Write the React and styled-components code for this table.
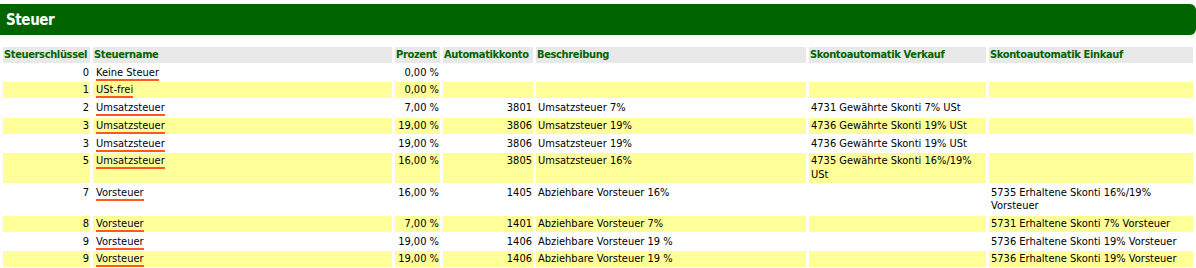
import styled, { createGlobalStyle } from 'styled-components';

const GlobalStyle = createGlobalStyle`
    html, body {
        margin: 0;
        padding: 0;
        background: #ffffff;
    }
    body {
        font-family: "DejaVu Sans Condensed", "DejaVu Sans", "Liberation Sans", sans-serif;
        font-size: 11px;
        color: #000000;
    }
`

const Page = styled.div`
    width: 1196px;
    padding-top: 4px;
`

const TitleBar = styled.div`
    height: 31px;
    background: #006400;
    border-radius: 0 6px 6px 0;
    display: flex;
    align-items: center;
    padding-left: 6px;
`

const Title = styled.h1`
    margin: 0;
    color: #ffffff;
    font-family: "DejaVu Sans Condensed", "DejaVu Sans", sans-serif;
    font-size: 15px;
    font-weight: bold;
    letter-spacing: -0.4px;
`

const Table = styled.table`
    width: 1196px;
    margin-top: 10px;
    table-layout: fixed;
    border-collapse: separate;
    border-spacing: 3px 2px;
`

const HeadCell = styled.th`
    background: #e8e8e8;
    color: #006400;
    font-weight: bold;
    text-align: left;
    padding: 1px;
    line-height: 13.7px;
    letter-spacing: -0.35px;
    white-space: nowrap;
    overflow: hidden;
`

const Cell = styled.td`
    background: ${(p) => (p.$yellow ? '#ffff99' : '#ffffff')};
    text-align: ${(p) => (p.$num ? 'right' : 'left')};
    vertical-align: top;
    padding: 1px ${(p) => (p.$num ? '1px' : '2px')};
    line-height: 13.7px;
`

const NameLink = styled.a`
    color: #000022;
    text-decoration: none;
    border-bottom: 2px solid #ff5a1a;
    margin-left: 1px;
`

const columns = [
    { title: 'Steuerschlüssel', width: 87 },
    { title: 'Steuername', width: 299 },
    { title: 'Prozent', width: 45 },
    { title: 'Automatikkonto', width: 90 },
    { title: 'Beschreibung', width: 270 },
    { title: 'Skontoautomatik Verkauf', width: 177 },
    { title: 'Skontoautomatik Einkauf', width: 204 },
];

const rows = [
    ['0', 'Keine Steuer', '0,00 %', '', '', '', ''],
    ['1', 'USt-frei', '0,00 %', '', '', '', ''],
    ['2', 'Umsatzsteuer', '7,00 %', '3801', 'Umsatzsteuer 7%', '4731 Gewährte Skonti 7% USt', ''],
    ['3', 'Umsatzsteuer', '19,00 %', '3806', 'Umsatzsteuer 19%', '4736 Gewährte Skonti 19% USt', ''],
    ['3', 'Umsatzsteuer', '19,00 %', '3806', 'Umsatzsteuer 19%', '4736 Gewährte Skonti 19% USt', ''],
    ['5', 'Umsatzsteuer', '16,00 %', '3805', 'Umsatzsteuer 16%', '4735 Gewährte Skonti 16%/19% USt', ''],
    ['7', 'Vorsteuer', '16,00 %', '1405', 'Abziehbare Vorsteuer 16%', '', '5735 Erhaltene Skonti 16%/19% Vorsteuer'],
    ['8', 'Vorsteuer', '7,00 %', '1401', 'Abziehbare Vorsteuer 7%', '', '5731 Erhaltene Skonti 7% Vorsteuer'],
    ['9', 'Vorsteuer', '19,00 %', '1406', 'Abziehbare Vorsteuer 19 %', '', '5736 Erhaltene Skonti 19% Vorsteuer'],
    ['9', 'Vorsteuer', '19,00 %', '1406', 'Abziehbare Vorsteuer 19 %', '', '5736 Erhaltene Skonti 19% Vorsteuer'],
];

const numeric = [true, false, true, true, false, false, false];

const App = () => {
    return (
        <Page>
            <GlobalStyle />
            <TitleBar>
                <Title>Steuer</Title>
            </TitleBar>
            <Table>
                <colgroup>
                    {columns.map((c) => (
                        <col key={c.title} style={{ width: c.width }} />
                    ))}
                </colgroup>
                <thead>
                    <tr>
                        {columns.map((c) => (
                            <HeadCell key={c.title}>{c.title}</HeadCell>
                        ))}
                    </tr>
                </thead>
                <tbody>
                    {rows.map((r, i) => (
                        <tr key={i}>
                            {r.map((v, j) => (
                                <Cell key={j} $yellow={i % 2 === 1} $num={numeric[j]}>
                                    {j === 1 ? <NameLink href="#">{v}</NameLink> : v}
                                </Cell>
                            ))}
                        </tr>
                    ))}
                </tbody>
            </Table>
        </Page>
    );
}
export default App;
